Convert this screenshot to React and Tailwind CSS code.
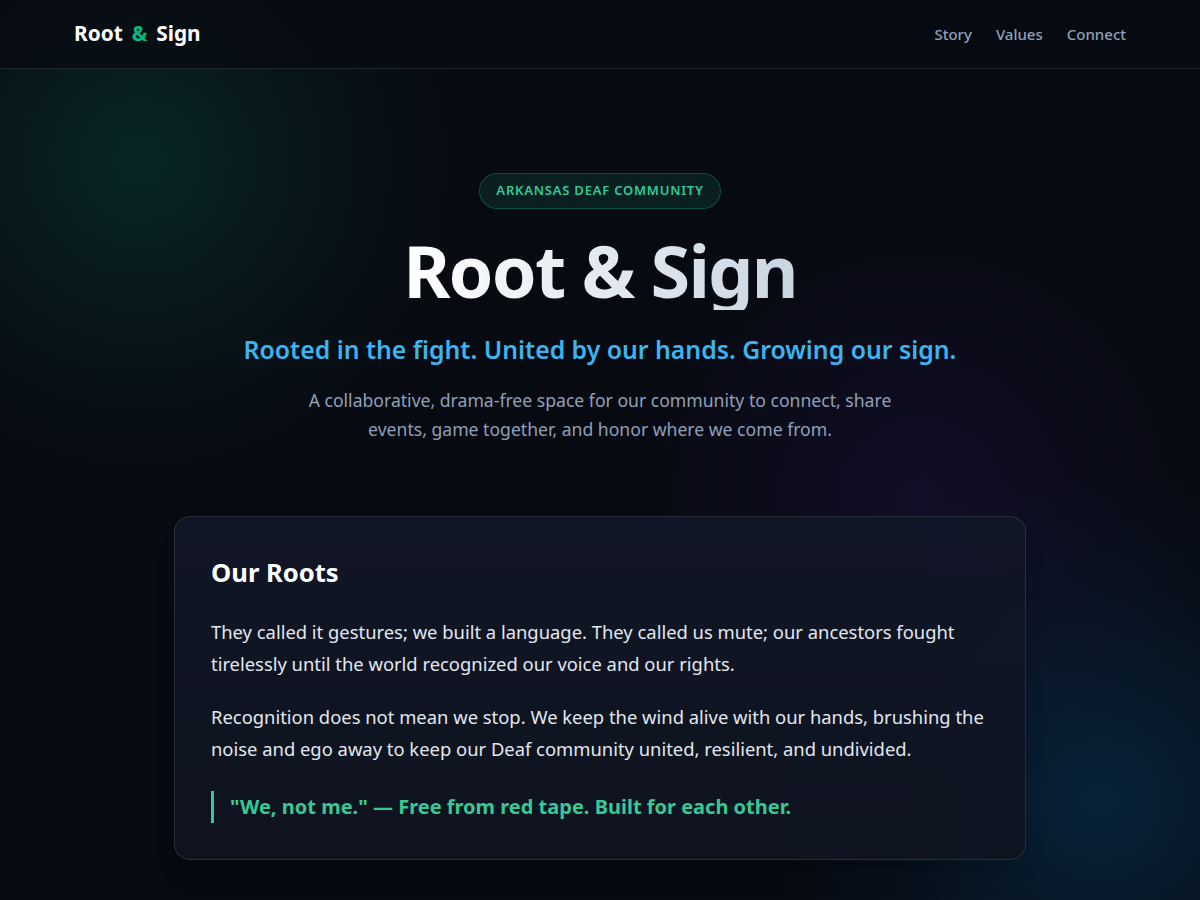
import React from "react";

const navLinks = ["Story", "Values", "Connect"];

export default function App() {
  return (
    <div
      className="relative min-h-screen overflow-hidden bg-[#070a11] text-white"
      style={{ fontFamily: '"Noto Sans", "Open Sans", sans-serif' }}
    >
      {/* background glows */}
      <div className="pointer-events-none absolute inset-0">
        <div className="absolute -left-[200px] -top-[180px] h-[680px] w-[680px] rounded-full bg-[radial-gradient(circle,rgba(10,62,55,0.55)_0%,rgba(10,55,50,0.25)_35%,transparent_70%)]" />
        <div className="absolute left-[620px] top-[200px] h-[600px] w-[600px] rounded-full bg-[radial-gradient(circle,rgba(70,30,140,0.18)_0%,rgba(60,30,130,0.06)_45%,transparent_70%)]" />
        <div className="absolute left-[760px] top-[460px] h-[680px] w-[680px] rounded-full bg-[radial-gradient(circle,rgba(10,80,130,0.35)_0%,rgba(10,70,120,0.1)_45%,transparent_70%)]" />
      </div>

      {/* --- Top Bar --- */}
      <header className="relative z-10 h-[69px] border-b border-white/10 bg-[#070a11]/70">
        <div className="mx-auto flex h-full max-w-[1100px] items-center justify-between px-6">
          <div className="text-[20.8px] font-bold">
            Root<span className="mx-[9px] text-emerald-500">&amp;</span>Sign
          </div>
          <nav className="flex items-center gap-6 text-[15px] font-medium text-slate-400">
            {navLinks.map((l) => (
              <a key={l} href="#">
                {l}
              </a>
            ))}
          </nav>
        </div>
      </header>

      {/* --- Hero --- */}
      <main className="relative z-10 flex flex-col items-center px-6">
        <div className="mt-[104px] rounded-full border border-emerald-500/30 bg-[#0c2a26]/70 px-4 py-[7px] text-[13px] font-semibold uppercase tracking-[0.06em] text-[#34c997]">
          Arkansas Deaf Community
        </div>

        <h1 className="mt-[22px] bg-gradient-to-r from-white to-slate-300 bg-clip-text text-[72px] font-bold leading-[1.1] tracking-tight text-transparent">
          Root &amp; Sign
        </h1>

        <p className="mt-[21px] text-[24.8px] font-semibold text-[#3cb4ef]">
          Rooted in the fight. United by our hands. Growing our sign.
        </p>

        <p className="mt-[18px] max-w-[600px] text-center text-[17.6px] leading-[29px] text-slate-400">
          A collaborative, drama-free space for our community to connect, share
          events, game together, and honor where we come from.
        </p>

        {/* --- Our Roots Card --- */}
        <section className="mb-10 mt-[72px] w-[852px] rounded-2xl border border-white/10 bg-gradient-to-b from-[#121728]/95 to-[#0f1420]/95 px-9 pb-9 pt-10 shadow-xl">
          <h2 className="text-[25.6px] font-bold leading-8 text-white">
            Our Roots
          </h2>
          <p className="mt-[27px] text-[18.4px] leading-[32.2px] text-slate-200">
            They called it gestures; we built a language. They called us mute;
            our ancestors fought tirelessly until the world recognized our voice
            and our rights.
          </p>
          <p className="mt-[21px] text-[18.4px] leading-[32.2px] text-slate-200">
            Recognition does not mean we stop. We keep the wind alive with our
            hands, brushing the noise and ego away to keep our Deaf community
            united, resilient, and undivided.
          </p>
          <blockquote className="mt-[25px] border-l-[3px] border-[#34c997] pl-4 text-[20px] font-bold leading-8 text-[#34c997]">
            "We, not me." — Free from red tape. Built for each other.
          </blockquote>
        </section>
      </main>
    </div>
  );
}
